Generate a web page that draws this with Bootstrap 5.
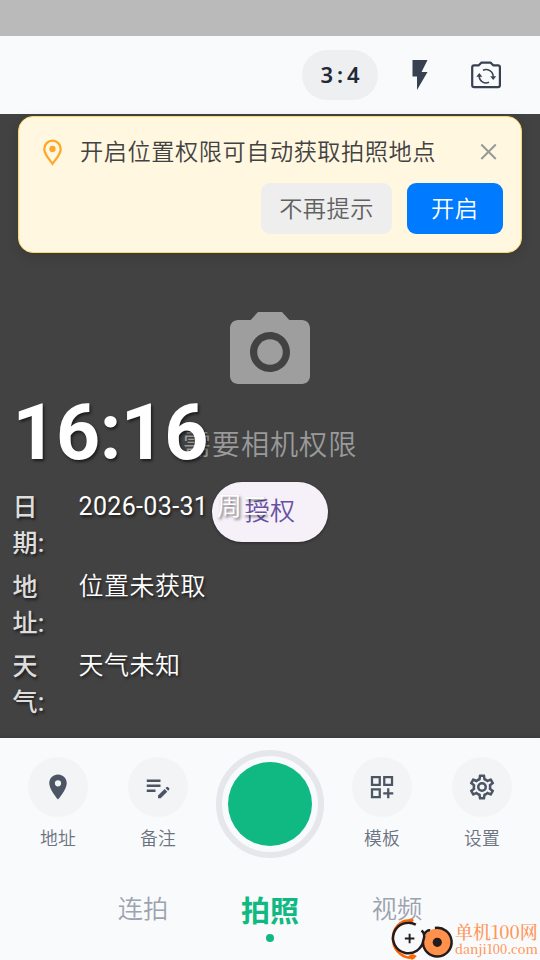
<!DOCTYPE html>
<html lang="zh-CN">
<head>
<meta charset="utf-8">
<meta name="viewport" content="width=device-width, initial-scale=1">
<title>水印相机</title>
<link href="https://cdn.jsdelivr.net/npm/bootstrap@5.3.0/dist/css/bootstrap.min.css" rel="stylesheet">
<style>
body{font-family:Roboto,"Noto Sans CJK SC",sans-serif;font-weight:350;width:540px;height:960px;overflow:hidden;background:#f9fafc}
svg{display:block;flex:none}
.status-strip{height:36px;background:#bababa}
.top-tools{height:78px;background:#f9fafc;padding-right:38px}
.ratio-pill{width:76px;height:50px;background:#eeeff1;color:#1f2937;font:600 22px/49px "Noto Sans",sans-serif;letter-spacing:4px;padding-left:4px}
.camera-flip{margin-left:32px}
.viewfinder{height:624px;background:#424242}
.placeholder-area{padding-top:190px;height:100%}
.need-text{font-size:28.2px;line-height:42px;letter-spacing:.9px;color:#9a9a9a;margin-top:33px}
.grant-btn{width:116px;height:60px;margin-top:15px;background:#f6f1f9;color:#6750a4;font-size:25px;font-weight:350;letter-spacing:.3px;padding:0;box-shadow:0 1px 3px rgba(0,0,0,.4)}
.notice{top:2px;left:18px;width:504px;height:137px;border:1.5px solid #ffd766;border-radius:15px;background:#fff7e0;padding:17px 18px 0 20px;z-index:3;box-shadow:0 3px 12px rgba(0,0,0,.15)}
.notice-text{font-size:23.2px;letter-spacing:.55px;line-height:36px;color:#424242;padding-left:14px}
.notice-close{margin-right:1px}
.notice-actions{gap:15px;margin-top:13px;padding-right:.5px}
.notice-btn{height:51px;border-radius:9px;font-size:23.2px;letter-spacing:.5px;font-weight:350;padding:2px 0 0;border:0}
.skip-btn{width:131px;background:#eee;color:#616161}
.open-btn{width:95.5px;background:#007bff;color:#fff}
.stamp{top:280px;left:12.5px;width:280px;color:#fff;text-shadow:1.5px 1.5px 3px rgba(0,0,0,.6);z-index:2}
.stamp-time{font-size:77px;font-weight:700;line-height:78px;letter-spacing:-.6px;height:79px}
.stamp-row{height:79.5px;line-height:36px;font-size:25px}
.stamp-key{width:42px;margin-right:24px;padding-top:1px;letter-spacing:.3px;font-weight:500;color:#ddd;overflow-wrap:anywhere}
.stamp-val{letter-spacing:.5px;font-weight:350}
.stamp-date{font-weight:400;letter-spacing:.35px;margin-right:2px}
.dock{height:222px;background:#f9fafc;padding-top:12px;box-shadow:0 -1px 3px rgba(0,0,0,.15)}
.dock-row{height:108px}
.tool{width:100px;padding-top:7px}
.tool-disc{width:60px;height:60px;background:#f3f4f6;color:#4b5563}
.tool-label{font-size:17.8px;letter-spacing:.3px;line-height:26px;margin-top:9px;color:#6b7280;font-weight:350}
.shutter{width:108px;height:108px;border:6px solid #e5e7eb;padding:6px;margin:0 8px}
.shutter-core{background:#10b981}
.modes{height:72px;margin-top:22px}
.mode-tab{width:127px;font-size:25.3px;line-height:36px;color:#9ca3af;padding-top:11.5px}
.mode-active{font-size:29px;font-weight:700;color:#10b981;padding-top:13px;line-height:38px}
.mode-dot{width:8px;height:8px;background:#10b981;margin-top:3px}
.site-mark{right:2px;bottom:0;color:#ff9657;z-index:4}
.site-name{font-family:"Noto Serif CJK SC","Liberation Serif","Noto Sans CJK SC",serif;font-size:18px;line-height:20px;font-weight:500}
.site-url{font-family:"Noto Serif CJK SC","Liberation Serif",serif;font-size:12.7px;line-height:16px;font-weight:500;padding-bottom:3px;box-sizing:content-box}
</style>
</head>
<body>
<div class="status-strip"></div>
<header class="top-tools d-flex justify-content-end align-items-center">
  <div class="ratio-pill rounded-pill text-center">3:4</div>
  <svg class="ms-4" width="36" height="36" viewBox="0 0 24 24" fill="#374151"><path d="M7 2v11h3v9l7-12h-4l4-8z"/></svg>
  <svg class="camera-flip" width="32" height="28" viewBox="0 0 32 28" fill="none" stroke="#374151" stroke-width="2.2"><path d="M4.100 4.300H8.800L11.300 1.700H20.700L23.200 4.300H28Q29.900 4.300 29.900 6.200V24.300Q29.900 26.200 28 26.200H4.100Q2.200 26.200 2.200 24.300V6.200Q2.200 4.300 4.100 4.300Z" stroke-linejoin="round"/><path stroke-width="1.500" d="M13 9.300C17.500 7.200 23.200 10.100 23.200 15.700M19 21.300C14.300 23.200 9.200 20.200 9.200 15"/><path fill="#374151" stroke="none" d="M20.200 15.300h6l-3 3.600zM6.300 15.800l3-3.700 3 3.700z"/></svg>
</header>
<main class="viewfinder position-relative">
  <div class="placeholder-area d-flex flex-column align-items-center">
    <svg width="96" height="88" viewBox="0 0 24 22" fill="#9e9e9e"><circle cx="12" cy="12" r="3.2"/><path d="M9 2 7.170 4H4c-1.100 0-2 .9-2 2v12c0 1.100.9 2 2 2h16c1.100 0 2-.9 2-2V6c0-1.100-.9-2-2-2h-3.170L15 2H9zm3 15c-2.760 0-5-2.240-5-5s2.240-5 5-5 5 2.240 5 5-2.240 5-5 5z"/></svg>
    <div class="need-text">需要相机权限</div>
    <button class="btn grant-btn rounded-pill border-0">授权</button>
  </div>
  <section class="stamp position-absolute">
    <div class="stamp-time">16:16</div>
    <div class="stamp-row d-flex pt-3"><div class="stamp-key">日期:</div><div class="stamp-val"><span class="stamp-date">2026-03-31 </span>周二</div></div>
    <div class="stamp-row d-flex pt-3"><div class="stamp-key">地址:</div><div class="stamp-val">位置未获取</div></div>
    <div class="stamp-row d-flex pt-3"><div class="stamp-key">天气:</div><div class="stamp-val">天气未知</div></div>
  </section>
  <section class="notice position-absolute">
    <div class="d-flex align-items-center">
      <svg width="27" height="27" viewBox="0 0 24 24" fill="none" stroke="#ffa726" stroke-width="2"><path d="M12 22C9 18 4.700 13.500 4.700 8.800a7.300 7.300 0 0 1 14.600 0C19.300 13.500 15 18 12 22Z"/><circle cx="12" cy="8.800" r="2.800" fill="#ffa726" stroke="none"/></svg>
      <div class="notice-text flex-grow-1">开启位置权限可自动获取拍照地点</div>
      <svg class="notice-close" width="27" height="27" viewBox="0 0 27 27" stroke="#999" stroke-width="2"><path d="m6.300 5.500 14.500 14.500m0-14.500L6.300 20"/></svg>
    </div>
    <div class="notice-actions d-flex justify-content-end">
      <button class="btn notice-btn skip-btn">不再提示</button>
      <button class="btn notice-btn open-btn">开启</button>
    </div>
  </section>
</main>
<footer class="dock position-relative">
  <div class="dock-row d-flex justify-content-center">
    <div class="tool d-flex flex-column align-items-center"><div class="tool-disc rounded-circle d-flex align-items-center justify-content-center"><svg width="30" height="30" viewBox="0 0 24 24" fill="currentColor"><path d="M12 2C8.130 2 5 5.130 5 9c0 5.250 7 13 7 13s7-7.750 7-13c0-3.870-3.130-7-7-7zm0 9.500a2.500 2.500 0 1 1 0-5 2.500 2.500 0 0 1 0 5z"/></svg></div><div class="tool-label">地址</div></div>
    <div class="tool d-flex flex-column align-items-center"><div class="tool-disc rounded-circle d-flex align-items-center justify-content-center"><svg width="30" height="30" viewBox="0 0 24 24" fill="currentColor"><path d="M3 10h11v2H3v-2zm0-4h11v2H3V6zm0 8h7v2H3v-2zm15.010-1.130.71-.71a1 1 0 0 1 1.410 0l.71.71a1 1 0 0 1 0 1.410l-.71.710-2.120-2.120zm-.710.710L12 18.880V21h2.120l5.300-5.300-2.120-2.120z"/></svg></div><div class="tool-label">备注</div></div>
    <div class="shutter rounded-circle flex-shrink-0"><div class="shutter-core rounded-circle h-100"></div></div>
    <div class="tool d-flex flex-column align-items-center"><div class="tool-disc rounded-circle d-flex align-items-center justify-content-center"><svg width="30" height="30" viewBox="0 0 24 24" fill="none" stroke="currentColor" stroke-width="1.800"><path d="M4 4h6.200v6.200H4zM13.800 4H20v6.200h-6.200zM4 13.800h6.200V20H4zM17 13v8M13 17h8"/></svg></div><div class="tool-label">模板</div></div>
    <div class="tool d-flex flex-column align-items-center"><div class="tool-disc rounded-circle d-flex align-items-center justify-content-center"><svg width="30" height="30" viewBox="0 0 24 24" fill="currentColor"><path d="M19.430 12.980c.04-.32.07-.64.07-.98 0-.34-.03-.66-.07-.98l2.110-1.650c.19-.15.24-.42.12-.64l-2-3.460c-.09-.16-.26-.25-.44-.25-.06 0-.12.01-.17.03l-2.490 1c-.52-.4-1.080-.73-1.690-.98l-.38-2.650C14.460 2.180 14.250 2 14 2h-4c-.25 0-.46.18-.49.42l-.38 2.650c-.61.25-1.170.59-1.690.98l-2.490-1c-.06-.02-.12-.03-.18-.03-.17 0-.34.09-.43.25l-2 3.460c-.13.22-.07.49.12.64l2.110 1.650c-.04.32-.07.65-.07.98 0 .33.03.66.07.98l-2.110 1.650c-.19.15-.24.42-.12.64l2 3.460c.09.16.26.25.44.25.06 0 .12-.01.17-.03l2.490-1c.52.4 1.080.73 1.690.98l.38 2.650c.03.24.24.42.49.42h4c.25 0 .46-.18.49-.42l.38-2.650c.61-.25 1.170-.59 1.690-.98l2.490 1c.06.02.12.03.18.03.17 0 .34-.09.43-.25l2-3.460c.12-.22.07-.49-.12-.64l-2.110-1.650zm-1.980-1.710c.04.31.05.52.05.73 0 .21-.02.43-.05.73l-.14 1.130.89.7 1.080.84-.7 1.210-1.270-.51-1.040-.42-.9.68c-.43.32-.84.56-1.250.73l-1.060.43-.16 1.130-.2 1.350h-1.400l-.19-1.350-.16-1.130-1.060-.43c-.43-.18-.83-.41-1.230-.71l-.91-.7-1.060.43-1.270.51-.7-1.210 1.080-.84.89-.7-.14-1.130c-.03-.31-.05-.54-.05-.74s.02-.43.05-.73l.14-1.130-.89-.7-1.080-.84.7-1.210 1.270.51 1.040.42.9-.68c.43-.32.84-.56 1.250-.73l1.060-.43.16-1.130.2-1.350h1.390l.19 1.350.16 1.130 1.060.43c.43.18.83.41 1.230.71l.91.7 1.060-.43 1.270-.51.7 1.210-1.070.85-.89.7.14 1.130zM12 8a4 4 0 1 0 0 8 4 4 0 0 0 0-8zm0 6a2 2 0 1 1 0-4 2 2 0 0 1 0 4z"/></svg></div><div class="tool-label">设置</div></div>
  </div>
  <nav class="modes d-flex justify-content-center text-center">
    <div class="mode-tab">连拍</div>
    <div class="mode-tab mode-active">拍照<div class="mode-dot rounded-circle mx-auto"></div></div>
    <div class="mode-tab">视频</div>
  </nav>
  <div class="site-mark position-absolute d-flex align-items-end">
    <svg width="65" height="42" viewBox="0 0 66 44" fill="none"><path d="M22 3C10 0 1 12 2 23C3 36 15 44 25 41" stroke="#ff6500" stroke-width="2.600"/><path d="M17 3Q21-1 24 2L22 5Z" fill="#ff6500"/><path d="M18 40Q23 36 27 40L22 44Z" fill="#ff6500"/><circle cx="48.500" cy="25.500" r="14.500" fill="#ff914d"/><path d="M26 7A16 16 0 1 0 34 23C35.500 19 34.500 15 32 13M35 17Q38 12 41 13M46 10.500A15 15 0 1 1 33.500 25" stroke="#241c1c" stroke-width="2.600"/><path d="M19.500 16.500v10M14.500 21.500h10" stroke="#241c1c" stroke-width="2"/><circle cx="48.500" cy="25.500" r="4.800" fill="#241c1c"/></svg>
    <div class="site-text"><div class="site-name">单机100网</div><div class="site-url">danji100.com</div></div>
  </div>
</footer>
<script src="https://cdn.jsdelivr.net/npm/bootstrap@5.3.0/dist/js/bootstrap.bundle.min.js"></script>
</body>
</html>
